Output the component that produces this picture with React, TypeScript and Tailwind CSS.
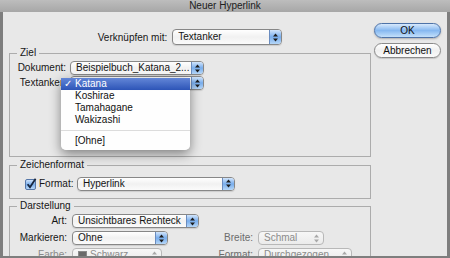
import clsx from "clsx";

function Arrows({ disabled }: { disabled?: boolean }) {
  const c = disabled ? "#a8a8a8" : "#1c1c1c";
  return (
    <svg width="5" height="9" viewBox="0 0 5 9">
      <path d="M2.5 0.5 L5 3.5 L0 3.5 Z" fill={c} />
      <path d="M0 5.5 L5 5.5 L2.5 8.5 Z" fill={c} />
    </svg>
  );
}

type PopUpProps = {
  label: string;
  className?: string;
  disabled?: boolean;
  swatch?: boolean;
};

function PopUp({ label, className, disabled, swatch }: PopUpProps) {
  return (
    <div
      className={clsx(
        "flex h-[14px] items-stretch rounded-[4px] border bg-linear-to-b",
        disabled
          ? "border-[#b8b8b8] from-[#f7f7f7] to-[#ebebeb] text-[#8c8c8c]"
          : "border-[#878787] from-white via-[#f1f1f1] to-[#fbfbfb] text-[#141414] shadow-[0_1px_1px_rgba(0,0,0,0.12)]",
        className
      )}
    >
      <div className="flex min-w-0 flex-1 items-center gap-[3px] overflow-hidden pl-[5px]">
        {swatch && <span className="h-[9px] w-[9px] shrink-0 border border-[#8a8a8a] bg-[#6a6a6a]" />}
        <span className="whitespace-nowrap leading-none">{label}</span>
      </div>
      <div
        className={
          disabled
            ? "flex w-[14px] shrink-0 items-center justify-center"
            : "flex w-[12px] shrink-0 items-center justify-center rounded-r-[3px] border-l border-[#6a8cbf] bg-linear-to-b from-[#d2e5fb] via-[#78adec] to-[#b6d7f8]"
        }
      >
        <Arrows disabled={disabled} />
      </div>
    </div>
  );
}

function Checkbox() {
  return (
    <svg width="12" height="12" viewBox="0 0 12 12" className="shrink-0">
      <defs>
        <linearGradient id="cb" x1="0" y1="0" x2="0" y2="1">
          <stop offset="0" stopColor="#d6e8fc" />
          <stop offset="0.5" stopColor="#7cafec" />
          <stop offset="1" stopColor="#bcdbf9" />
        </linearGradient>
      </defs>
      <rect x="0.5" y="1.5" width="10" height="10" rx="1.5" fill="url(#cb)" stroke="#5677a8" />
      <path d="M2.6 6.2 L5 9.2 L10.6 0.8" stroke="#16253d" strokeWidth="1.8" fill="none" />
    </svg>
  );
}

function Group({ title, className, children }: { title: string; className?: string; children?: React.ReactNode }) {
  return (
    <fieldset className={clsx("border border-[#acacac]", className)}>
      <legend className="ml-[7px] px-[3px] text-[10px] leading-[12px] text-[#161616]">{title}</legend>
      {children}
    </fieldset>
  );
}

function Menu() {
  const items = ["Koshirae", "Tamahagane", "Wakizashi"];
  return (
    <div className="absolute left-[-9px] top-[2px] z-10 w-[129px] rounded-b-[5px] bg-white/95 pb-[3px] text-[#111] shadow-[0_4px_12px_rgba(0,0,0,0.45)]">
      <div className="flex h-[12px] items-center bg-linear-to-b from-[#6386d7] to-[#2d54b7] text-white">
        <span className="w-[14px] pl-[3px] leading-none">✓</span>
        <span className="leading-none">Katana</span>
      </div>
      {items.map((i) => (
        <div key={i} className="flex h-[12px] items-center pl-[14px] leading-none">
          {i}
        </div>
      ))}
      <div className="flex h-[9px] items-center">
        <div className="h-px w-full bg-[#dcdcdc]" />
      </div>
      <div className="flex h-[12px] items-center pl-[14px] leading-none">[Ohne]</div>
    </div>
  );
}

export default function App() {
  return (
    <div className="flex h-[258px] w-[450px] flex-col overflow-hidden bg-[#e8e8e8] font-['Liberation_Sans',Arial,sans-serif] text-[10px] text-[#161616]">
      <div className="h-[12px] shrink-0 bg-linear-to-b from-[#bdbdbd] to-[#a7a7a7] text-center leading-[12px] text-[#202020]">
        Neuer Hyperlink
      </div>
      <div className="flex min-h-0 flex-1 overflow-hidden border-x-[3px] border-b-2 border-[#7e7e7e]">
        <div className="ml-[6px] flex w-[362px] shrink-0 flex-col">
          <div className="mt-[17px] flex h-[16px] items-center justify-center gap-[5px]">
            <span>Verknüpfen mit:</span>
            <PopUp label="Textanker" className="h-[16px] w-[110px]" />
          </div>

          <Group title="Ziel" className="mt-[2px]">
            <div className="h-[97px] pt-[2px]">
              <div className="grid grid-cols-[56px_134px] gap-x-[4px] gap-y-[1px]">
                <span className="self-center text-right leading-none">Dokument:</span>
                <PopUp label="Beispielbuch_Katana_2..." />
                <span className="self-center text-right leading-none">Textanker:</span>
                <div className="relative">
                  <PopUp label="Katana" />
                  <Menu />
                </div>
              </div>
            </div>
          </Group>

          <Group title="Zeichenformat" className="mt-[2px]">
            <div className="h-[27px] pt-[5px]">
              <div className="flex h-[15px] items-center pl-[15px]">
                <Checkbox />
                <span className="ml-[2px] w-[35px] leading-none">Format:</span>
                <PopUp label="Hyperlink" className="ml-[3px] w-[158px]" />
              </div>
            </div>
          </Group>

          <Group title="Darstellung" className="mt-[1px]">
            <div className="h-[70px] pt-[2px]">
              <div className="grid grid-cols-[57px_127px_49px_96px] gap-x-[5px] gap-y-[3px]">
                <span className="self-center text-right leading-none">Art:</span>
                <PopUp label="Unsichtbares Rechteck" />
                <span />
                <span />
                <span className="self-center text-right leading-none">Markieren:</span>
                <PopUp label="Ohne" className="w-[96px]" />
                <span className="self-center text-right leading-none text-[#6c6c6c]">Breite:</span>
                <PopUp label="Schmal" disabled className="w-[66px]" />
                <span className="self-center text-right leading-none text-[#8a8a8a]">Farbe:</span>
                <PopUp label="Schwarz" disabled swatch className="w-[90px]" />
                <span className="self-center text-right leading-none text-[#6c6c6c]">Format:</span>
                <PopUp label="Durchgezogen" disabled className="w-[94px]" />
              </div>
            </div>
          </Group>
        </div>

        <div className="ml-[3px] mt-[11px] flex w-[67px] flex-col gap-[5px]">
          <button className="h-[15px] rounded-full border border-[#4e73a8] bg-linear-to-b from-[#d8e9fc] via-[#86b8f0] to-[#c3e0fa] leading-none text-[#111] shadow-[0_1px_2px_rgba(0,0,0,0.25)]">
            OK
          </button>
          <button className="h-[15px] rounded-full border border-[#8a8a8a] bg-linear-to-b from-white via-[#f0f0f0] to-[#fafafa] leading-none text-[#111] shadow-[0_1px_1px_rgba(0,0,0,0.15)]">
            Abbrechen
          </button>
        </div>
      </div>
    </div>
  );
}
